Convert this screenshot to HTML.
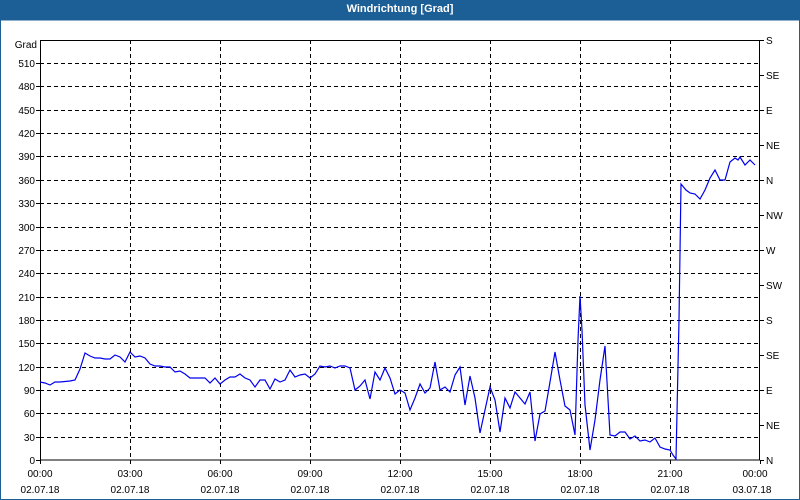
<!DOCTYPE html>
<html><head><meta charset="utf-8"><style>
html,body{margin:0;padding:0;background:#fff;}
body{width:800px;height:500px;overflow:hidden;position:relative;font-family:"Liberation Sans",sans-serif;}
.title{position:absolute;left:0;top:0;width:800px;height:20px;background:#1c5e96;color:#fff;font-size:11px;font-weight:bold;text-align:center;line-height:19px;}
</style></head><body>
<div class="title">Windrichtung [Grad]</div>
<svg width="800" height="500" style="position:absolute;left:0;top:0" font-family="Liberation Sans, sans-serif" font-size="10">
<rect x="0.5" y="20" width="799" height="479.5" fill="none" stroke="#1c5e96" stroke-width="1"/>
<g stroke="#000" stroke-dasharray="4,3" stroke-width="1">
<line x1="40" y1="63.5" x2="760" y2="63.5"/><line x1="40" y1="86.5" x2="760" y2="86.5"/>
<line x1="40" y1="110.5" x2="760" y2="110.5"/><line x1="40" y1="133.5" x2="760" y2="133.5"/>
<line x1="40" y1="156.5" x2="760" y2="156.5"/><line x1="40" y1="180.5" x2="760" y2="180.5"/>
<line x1="40" y1="203.5" x2="760" y2="203.5"/><line x1="40" y1="227.5" x2="760" y2="227.5"/>
<line x1="40" y1="250.5" x2="760" y2="250.5"/><line x1="40" y1="273.5" x2="760" y2="273.5"/>
<line x1="40" y1="297.5" x2="760" y2="297.5"/><line x1="40" y1="320.5" x2="760" y2="320.5"/>
<line x1="40" y1="343.5" x2="760" y2="343.5"/><line x1="40" y1="367.5" x2="760" y2="367.5"/>
<line x1="40" y1="390.5" x2="760" y2="390.5"/><line x1="40" y1="413.5" x2="760" y2="413.5"/>
<line x1="40" y1="437.5" x2="760" y2="437.5"/>
<line x1="130.5" y1="40" x2="130.5" y2="460"/><line x1="220.5" y1="40" x2="220.5" y2="460"/>
<line x1="310.5" y1="40" x2="310.5" y2="460"/><line x1="400.5" y1="40" x2="400.5" y2="460"/>
<line x1="490.5" y1="40" x2="490.5" y2="460"/><line x1="580.5" y1="40" x2="580.5" y2="460"/>
<line x1="670.5" y1="40" x2="670.5" y2="460"/>
</g>
<rect x="40.5" y="40.5" width="719" height="419.5" fill="none" stroke="#000"/>
<g stroke="#000">
<path d="M760 40.5h4M760 75.5h4M760 110.5h4M760 145.5h4M760 180.5h4M760 215.5h4M760 250.5h4M760 285.5h4M760 320.5h4M760 355.5h4M760 390.5h4M760 425.5h4M760 460.5h4"/>
<path d="M40.5 460v4M130.5 460v4M220.5 460v4M310.5 460v4M400.5 460v4M490.5 460v4M580.5 460v4M670.5 460v4M760.5 460v4"/>
<path d="M36 63.5h4M36 86.5h4M36 110.5h4M36 133.5h4M36 156.5h4M36 180.5h4M36 203.5h4M36 227.5h4M36 250.5h4M36 273.5h4M36 297.5h4M36 320.5h4M36 343.5h4M36 367.5h4M36 390.5h4M36 413.5h4M36 437.5h4M36 460.5h4"/>
</g>
<g text-anchor="end" fill="#000">
<text x="37" y="48">Grad</text>
<text x="35" y="67">510</text><text x="35" y="90">480</text><text x="35" y="114">450</text>
<text x="35" y="137">420</text><text x="35" y="160">390</text><text x="35" y="184">360</text>
<text x="35" y="207">330</text><text x="35" y="231">300</text><text x="35" y="254">270</text>
<text x="35" y="277">240</text><text x="35" y="301">210</text><text x="35" y="324">180</text>
<text x="35" y="347">150</text><text x="35" y="371">120</text><text x="35" y="394">90</text>
<text x="35" y="417">60</text><text x="35" y="441">30</text><text x="35" y="464">0</text>
</g>
<g fill="#000">
<text x="766" y="44">S</text><text x="766" y="79">SE</text><text x="766" y="114">E</text>
<text x="766" y="149">NE</text><text x="766" y="184">N</text><text x="766" y="219">NW</text>
<text x="766" y="254">W</text><text x="766" y="289">SW</text><text x="766" y="324">S</text>
<text x="766" y="359">SE</text><text x="766" y="394">E</text><text x="766" y="429">NE</text>
<text x="766" y="464">N</text>
</g>
<g text-anchor="middle" fill="#000">
<text x="40" y="477">00:00</text><text x="40" y="493">02.07.18</text>
<text x="130" y="477">03:00</text><text x="130" y="493">02.07.18</text>
<text x="220" y="477">06:00</text><text x="220" y="493">02.07.18</text>
<text x="310" y="477">09:00</text><text x="310" y="493">02.07.18</text>
<text x="400" y="477">12:00</text><text x="400" y="493">02.07.18</text>
<text x="490" y="477">15:00</text><text x="490" y="493">02.07.18</text>
<text x="580" y="477">18:00</text><text x="580" y="493">02.07.18</text>
<text x="670" y="477">21:00</text><text x="670" y="493">02.07.18</text>
<text x="755" y="477">00:00</text><text x="752" y="493">03.07.18</text>
</g>
<polyline fill="none" stroke="#0000ee" stroke-width="1.2" points="40,382 45,383 50,385 55,382 60,382 70,381 75,380 80,369 85,353 90,356 95,358 100,358 105,359 110,359 115,355 120,357 125,362 130,352 135,357 140,356 145,358 150,364 155,366 160,366 165,367 170,367 175,372 180,371 185,374 190,378 195,378 200,378 205,378 210,383 215,378 220,384 225,380 230,377 235,377 240,374 245,378 250,380 255,387 260,380 265,380 270,389 275,379 280,382 285,380 290,370 295,377 300,375 305,374 310,378 315,374 320,366 325,367 330,366 335,368 340,366 345,366 350,368 355,390 360,386 365,380 370,399 375,372 380,380 385,368 390,378 395,394 400,390 405,393 410,410 415,398 420,384 425,393 430,388 435,362 440,390 445,387 450,392 455,375 460,367 465,405 470,376 475,398 480,433 485,410 490,387 495,400 500,432 505,398 510,408 515,392 520,398 525,404 530,392 535,441 540,414 545,411 550,382 555,352 560,380 565,406 570,410 575,435 578,340 580,296 582,330 585,405 590,450 595,420 600,380 605,346 610,435 615,436 620,432 625,432 630,439 635,436 640,441 645,440 650,442 655,438 660,447 665,449 670,450 673,455 676,459 679,320 681,184 686,190 690,193 695,194 700,199 705,190 710,178 715,170 720,180 725,180 730,162 735,158 738,160 740,157 745,165 750,160 755,165"/>
</svg>
</body></html>
